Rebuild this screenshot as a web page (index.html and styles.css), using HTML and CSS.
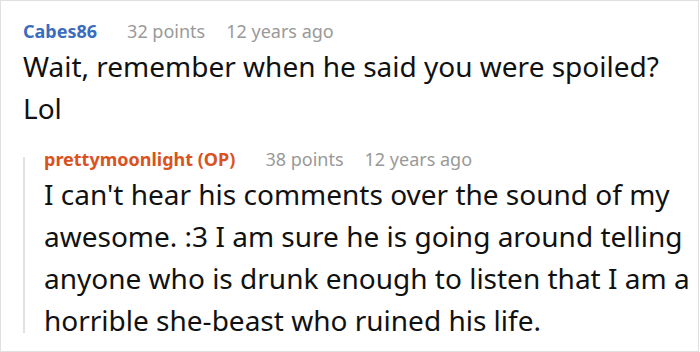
FILE: index.html
```html
<!DOCTYPE html>
<html lang="en">
<head>
    <meta charset="UTF-8">
    <meta name="viewport" content="width=device-width, initial-scale=1.0">
    <title>Comment thread</title>
    <link rel="stylesheet" href="styles.css">
</head>
<body>
    <div class="thread">
        <div class="comment">
            <div class="meta">
                <span class="author">Cabes86</span>
                <span class="points">32 points</span>
                <span class="time">12 years ago</span>
            </div>
            <p class="text">Wait, remember when he said you were spoiled? Lol</p>

            <!-- Reply -->
            <div class="comment reply">
                <div class="meta">
                    <span class="author op">prettymoonlight (OP)</span>
                    <span class="points">38 points</span>
                    <span class="time">12 years ago</span>
                </div>
                <p class="text">I can't hear his comments over the sound of my awesome. :3 I am sure he is going around telling anyone who is drunk enough to listen that I am a horrible she-beast who ruined his life.</p>
            </div>
        </div>
    </div>
</body>
</html>
```

FILE: styles.css
```css
* {
    margin: 0;
    padding: 0;
    box-sizing: border-box;
}

body {
    font-family: 'Noto Sans', 'Open Sans', sans-serif;
    background: #fff;
    color: #111;
}

/* Outer frame */
.thread {
    width: 699px;
    height: 352px;
    border: 1px solid #e0e0e0;
    padding: 16px 2px 0 22px;
}

/* Comment header */
.meta {
    display: flex;
    align-items: baseline;
    font-size: 18px;
    line-height: 28px;
}

.author {
    font-weight: 700;
    color: #3a6cbf;
    margin-right: 30px;
}

.author.op {
    color: #d9531e;
}

.points {
    color: #999;
    margin-right: 21px;
}

.time {
    color: #999;
}

.text {
    font-size: 28px;
    line-height: 42px;
}

/* Nested reply, with a thread line on the left */
.reply {
    position: relative;
    margin-top: 16px;
    padding-left: 21px;
}

.reply::before {
    content: "";
    position: absolute;
    left: 0;
    top: 12px;
    bottom: 8px;
    width: 2px;
    background: #e2e2e2;
}
```
